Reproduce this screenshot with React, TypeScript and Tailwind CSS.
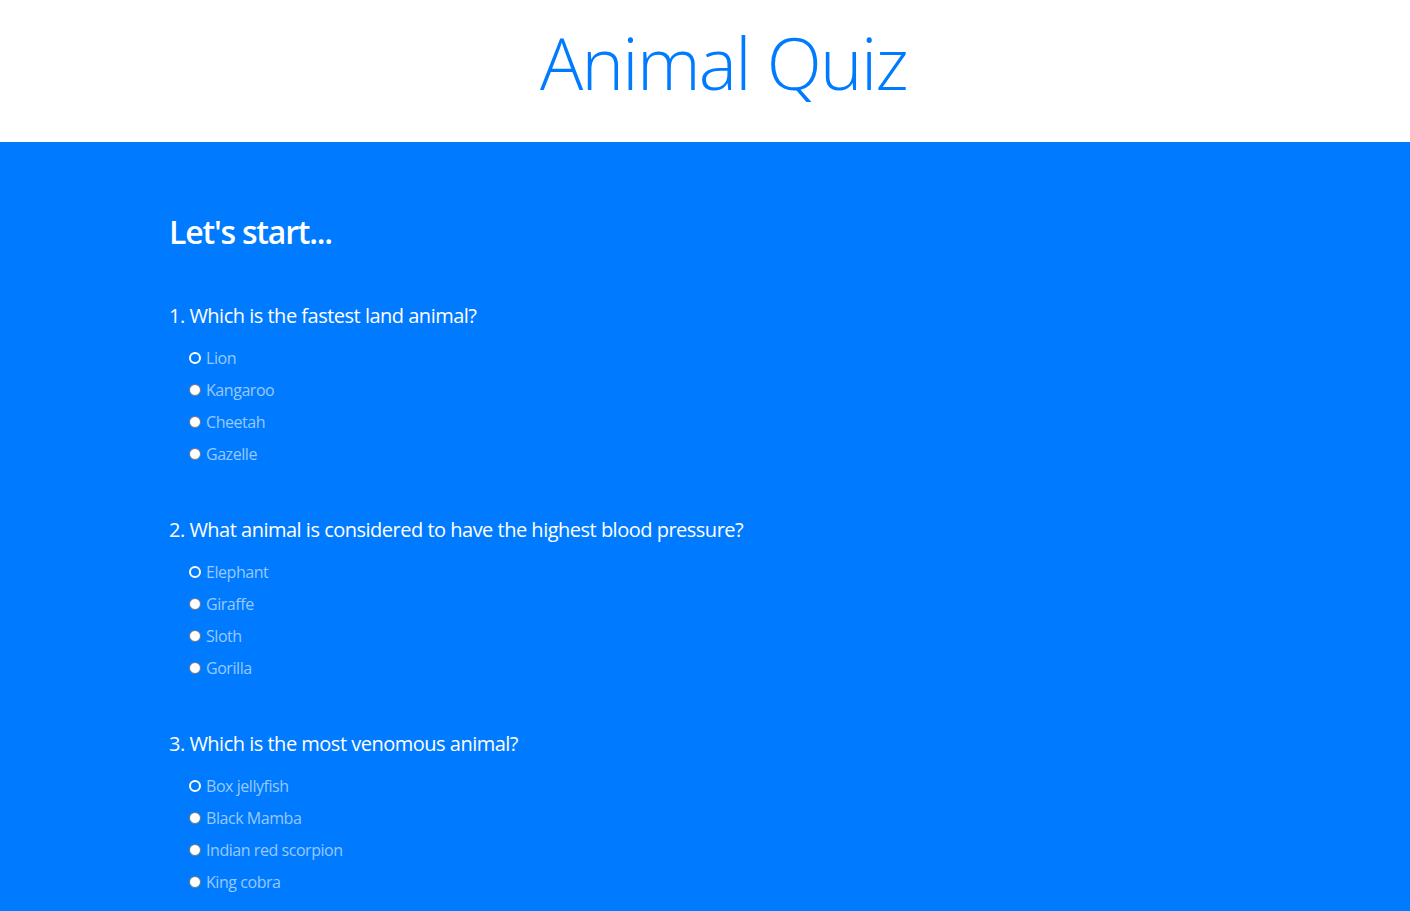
const questions = [
  {
    q: "1. Which is the fastest land animal?",
    options: ["Lion", "Kangaroo", "Cheetah", "Gazelle"],
  },
  {
    q: "2. What animal is considered to have the highest blood pressure?",
    options: ["Elephant", "Giraffe", "Sloth", "Gorilla"],
  },
  {
    q: "3. Which is the most venomous animal?",
    options: ["Box jellyfish", "Black Mamba", "Indian red scorpion", "King cobra"],
  },
]

const Radio = ({ first }: { first: boolean }) =>
  first ? (
    <span className="w-[12px] h-[12px] rounded-full border-2 border-white bg-transparent shrink-0" />
  ) : (
    <span className="w-[12px] h-[12px] rounded-full border border-[#767676] bg-white shrink-0" />
  )

const App = () => {
  return (
    <div className="min-h-screen bg-[#007bff] font-['Open_Sans',sans-serif]">
      <header className="bg-white h-[142px] flex items-center justify-center pl-[37px]">
        <h1 className="text-[#007bff] text-[72px] font-light leading-none tracking-[-1.7px] pb-[18px]">Animal Quiz</h1>
      </header>

      <main className="px-[169px] pt-[74px] pb-10 text-white">
        <h2 className="text-[32px] font-semibold leading-none tracking-[-1.2px]">Let's start...</h2>

        <div className="mt-[54px] flex flex-col gap-[50px]">
          {questions.map((item) => (
            <section key={item.q}>
              <h3 className="text-[20px] leading-[28px] tracking-[-0.5px]">{item.q}</h3>
              <ul className="mt-[16px] pl-[20px] flex flex-col gap-[8px]">
                {item.options.map((opt, i) => (
                  <li key={opt} className="flex items-center gap-[5px] h-[24px] text-[16px] tracking-[-0.45px] text-[#99c9ff]">
                    <Radio first={i === 0} />
                    <span>{opt}</span>
                  </li>
                ))}
              </ul>
            </section>
          ))}
        </div>
      </main>
    </div>
  )
}

export default App
